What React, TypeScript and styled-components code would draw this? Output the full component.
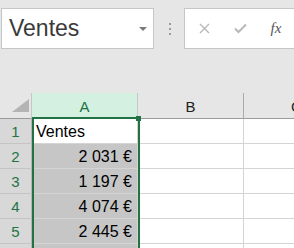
import React from 'react';
import styled, { createGlobalStyle } from 'styled-components';

const GREEN = '#217346';

const Global = createGlobalStyle`
  html, body { margin: 0; padding: 0; background: #e6e6e6; }
  body { font-family: "Liberation Sans", Arial, sans-serif; }
`;

const Root = styled.div`width: 294px; height: 248px; overflow: hidden; background: #e6e6e6; display: flex; flex-direction: column;`;
const Toolbar = styled.div`display: flex; align-items: center; height: 41px; margin-top: 8px; margin-bottom: 44px;`;
const NameBox = styled.div`
  flex-shrink: 0; box-sizing: border-box; margin-left: 1px; width: 153px; height: 41px;
  background: #fff; border: 1px solid #c6c6c6; display: flex; align-items: center;
  padding: 0 0 0 7px; font-size: 23px; color: #3a3a3a; position: relative;
`;
const Caret = styled.span`
  position: absolute; right: 6px; top: 18px; width: 0; height: 0;
  border-left: 4px solid transparent; border-right: 4px solid transparent; border-top: 4px solid #7a7a7a;
`;
const Dots = styled.div`flex-shrink: 0; display: flex; flex-direction: column; gap: 3px; margin: 0 13px 0 15px;`;
const Dot = styled.span`width: 2px; height: 2px; background: #9a9a9a;`;
const FormulaBox = styled.div`
  flex: 1; box-sizing: border-box; height: 41px; background: #fff; border: 1px solid #c6c6c6;
  border-right: none; display: flex; align-items: center; padding-left: 1px;
`;
const IconSlot = styled.div`width: 36px; flex-shrink: 0; display: flex; align-items: center; justify-content: center;`;
const Fx = styled.span`font-family: "Liberation Serif", "DejaVu Serif", serif; font-style: italic; font-size: 15px; color: #555;`;

const Sheet = styled.div`
  position: relative; display: grid;
  grid-template-columns: 32px 106px 106px 106px;
  grid-template-rows: 26px repeat(6, 25px);
`;
const Corner = styled.div`box-sizing: border-box; background: #e6e6e6; border-bottom: 1px solid #9b9b9b; border-right: 1px solid #c6c6c6; position: relative;`;
const ColHead = styled.div<{ $active?: boolean }>`
  box-sizing: border-box; display: flex; align-items: center; justify-content: center;
  font-size: 15px; padding-top: 2px;
  background: ${p => (p.$active ? '#d3f0e0' : '#e6e6e6')};
  color: ${p => (p.$active ? GREEN : '#222')};
  border-right: 1px solid ${p => (p.$active ? '#c6c6c6' : '#ababab')};
  border-bottom: 1px solid #9b9b9b;
`;
const RowHead = styled.div`
  box-sizing: border-box; display: flex; align-items: center; justify-content: center;
  font-size: 15px; color: ${GREEN}; background: #d8d8d8;
  border-bottom: 1px solid #c4c4c4; border-right: 1px solid #b5b5b5; padding-top: 1px;
`;
const Cell = styled.div<{ $fill?: string; $right?: boolean }>`
  box-sizing: border-box; display: flex; align-items: center;
  justify-content: ${p => (p.$right ? 'flex-end' : 'flex-start')};
  padding: 1px 5px 0 4px; font-size: 16px; color: #000;
  background: ${p => p.$fill || '#fff'};
  border-right: 1px solid #d4d4d4; border-bottom: 1px solid #d4d4d4; white-space: nowrap;
`;
const Selection = styled.div`
  position: absolute; left: 32px; top: 24px; width: 108px; height: 300px;
  box-sizing: border-box; border: 2px solid ${GREEN}; border-bottom: none; pointer-events: none;
`;
const Handle = styled.div`
  position: absolute; left: 136px; top: 23px; width: 5px; height: 5px; background: ${GREEN};
`;

const rows = [
  { n: '2', v: '2 031 €' },
  { n: '3', v: '1 197 €' },
  { n: '4', v: '4 074 €' },
  { n: '5', v: '2 445 €' },
  { n: '', v: '' },
];

export default function App() {
  return (
    <Root>
      <Global />
      <Toolbar>
        <NameBox>Ventes<Caret /></NameBox>
        <Dots><Dot /><Dot /><Dot /></Dots>
        <FormulaBox>
          <IconSlot>
            <svg width="11" height="11" viewBox="0 0 11 11"><path d="M1 1L10 10M10 1L1 10" stroke="#b8b8b8" strokeWidth="1.4" /></svg>
          </IconSlot>
          <IconSlot>
            <svg width="13" height="11" viewBox="0 0 13 11"><path d="M1 5.5L4.5 9L12 1.5" stroke="#b8b8b8" strokeWidth="2" fill="none" /></svg>
          </IconSlot>
          <IconSlot><Fx>fx</Fx></IconSlot>
        </FormulaBox>
      </Toolbar>
      <Sheet>
        <Corner>
          <svg width="17" height="13" viewBox="0 0 17 13" style={{ position: 'absolute', left: 12, top: 6 }}>
            <polygon points="17,0 17,13 0,13" fill="#b4b4b4" />
          </svg>
        </Corner>
        <ColHead $active>A</ColHead>
        <ColHead>B</ColHead>
        <ColHead>C</ColHead>
        <RowHead>1</RowHead>
        <Cell>Ventes</Cell>
        <Cell />
        <Cell />
        {rows.map((r, i) => (
          <React.Fragment key={i}>
            <RowHead>{r.n}</RowHead>
            <Cell $fill="#c6c6c6" $right>{r.v}</Cell>
            <Cell />
            <Cell />
          </React.Fragment>
        ))}
        <Selection />
        <Handle />
      </Sheet>
    </Root>
  );
}
